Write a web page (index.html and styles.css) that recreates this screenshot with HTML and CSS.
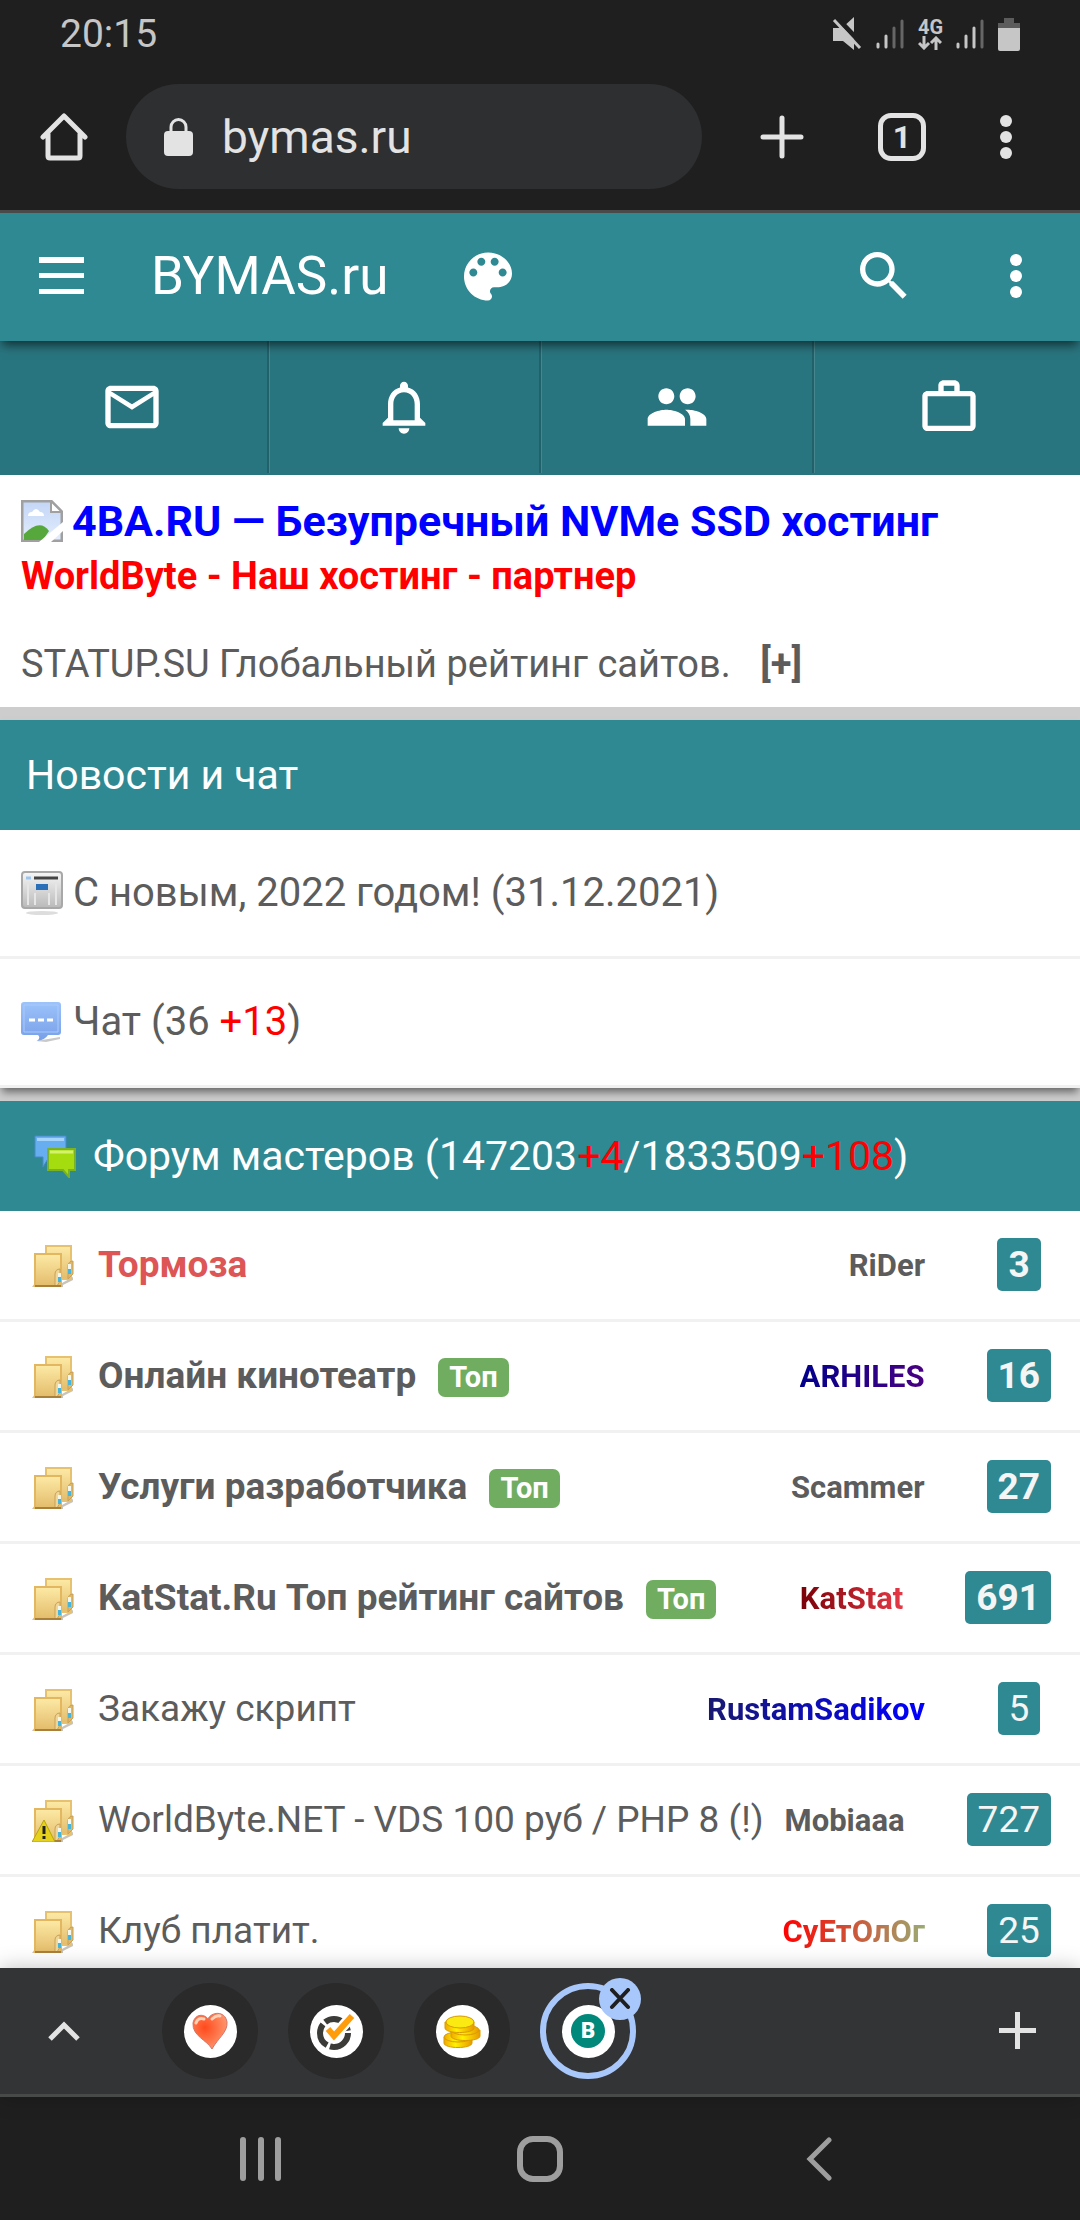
FILE: index.html
```html
<!DOCTYPE html>
<html lang="ru">
<head>
<meta charset="utf-8">
<meta name="viewport" content="width=device-width">
<title>BYMAS.ru</title>
<link rel="stylesheet" href="styles.css">
</head>
<body>

<svg class="sprite" aria-hidden="true">
  <defs>
    <linearGradient id="gold" x1="0" y1="0" x2="0" y2="1">
      <stop offset="0" stop-color="#fdeaa6"/>
      <stop offset="1" stop-color="#e3bc6b"/>
    </linearGradient>
    <linearGradient id="paper" x1="0" y1="0" x2="0" y2="1">
      <stop offset="0" stop-color="#f6f6f6"/>
      <stop offset="1" stop-color="#b9b9b9"/>
    </linearGradient>
    <linearGradient id="blue" x1="0" y1="0" x2="0" y2="1">
      <stop offset="0" stop-color="#9cc3fa"/>
      <stop offset="1" stop-color="#779fe8"/>
    </linearGradient>
    <linearGradient id="sky" x1="0" y1="0" x2="0" y2="1">
      <stop offset="0" stop-color="#c3d6f7"/>
      <stop offset="1" stop-color="#e3edfc"/>
    </linearGradient>
    <radialGradient id="heart" cx=".35" cy=".4" r=".7">
      <stop offset="0" stop-color="#ff4a1c"/>
      <stop offset="1" stop-color="#ff9a70"/>
    </radialGradient>
    <linearGradient id="coin">
      <stop offset="0" stop-color="#f0a800"/>
      <stop offset=".4" stop-color="#fff200"/>
      <stop offset="1" stop-color="#e89a00"/>
    </linearGradient>
  </defs>
  <symbol id="folder" viewBox="0 0 42 42">
    <path d="M0 42l3-4h27l11-6v3l-10 5v2z" fill="#c9c3b8"/>
    <path d="M14 1h25v33H14z" fill="url(#gold)" stroke="#e6c170" stroke-width="2"/>
    <path d="M36 34V21c0-3 2-5 5-5v13l-5 5z" fill="#dfb766" stroke="#c9a05a"/>
    <path d="M3 9h26v32H3z" fill="url(#gold)" stroke="#e3b75f" stroke-width="2"/>
    <path d="M23 41V29c0-3 2-5 5-5v12l-3 5z" fill="#efd596" stroke="#c9a05a"/>
    <path d="M3 41h26" stroke="#a9803a" stroke-width="2"/>
    <path d="M26 28h3v5h-3zM36 19h3v5h-3z" fill="#f4f7ee"/>
    <path d="M26 32h3v5h-3zM36 24h3v5h-3z" fill="#45b5dc"/>
  </symbol>
  <symbol id="dots" viewBox="0 0 12 44">
    <circle cx="6" cy="6" r="6"/><circle cx="6" cy="22" r="6"/><circle cx="6" cy="38" r="6"/>
  </symbol>
</svg>

<header class="status-bar">
  <time>20:15</time>
  <div class="status-icons">
    <svg width="30" height="34" viewBox="0 0 30 34" fill="#c6c6c6">
      <path d="M1 11h9L22 0v33L11 24H1z"/>
      <path d="M4 0l26 27" stroke="#1f1f1f" stroke-width="5"/>
      <path d="M8 11l4-5-6-6H0v8z" fill="#1f1f1f"/>
      <path d="M2 3l26 28" stroke="#c6c6c6" stroke-width="3"/>
    </svg>
    <svg width="28" height="34" viewBox="0 0 28 34" stroke="#c6c6c6" stroke-width="3" stroke-linecap="round">
      <path d="M2 27v3M10 19v11"/><path d="M18 11v19M26 4v26" stroke="#666"/>
    </svg>
    <span class="network">4G
      <svg width="24" height="14" viewBox="0 0 24 14" fill="none" stroke="#c6c6c6" stroke-width="3"><path d="M6 0v12M1 7l5 5 5-5M18 14V2M13 7l5-5 5 5"/></svg>
    </span>
    <svg width="28" height="34" viewBox="0 0 28 34" stroke="#c6c6c6" stroke-width="3" stroke-linecap="round">
      <path d="M2 27v3M10 19v11M18 11v19"/><path d="M26 4v26" stroke="#666"/>
    </svg>
    <svg width="22" height="34" viewBox="0 0 22 34">
      <path d="M6 1h10v5h6v5H0V6h6z" fill="#5c5c5c"/><path d="M0 11h22v21q0 2-2 2H2q-2 0-2-2z" fill="#c6c6c6"/>
    </svg>
  </div>
</header>

<div class="browser-bar">
  <button class="icon-btn" aria-label="Домой">
    <svg width="48" height="48" viewBox="0 0 48 48" fill="none" stroke="#e3e3e3" stroke-width="5" stroke-linejoin="round" stroke-linecap="round"><path d="M3 24L24 3l21 21M8 21v22q0 2 2 2h28q2 0 2-2V21"/></svg>
  </button>
  <label class="omnibox">
    <svg width="30" height="38" viewBox="0 0 30 38"><rect y="13" width="29" height="25" rx="4" fill="#e3e3e3"/><path d="M7 15V9a7 7 0 0 1 15 0v6" fill="none" stroke="#e3e3e3" stroke-width="3"/></svg>
    <input type="text" value="bymas.ru" aria-label="Адрес">
  </label>
  <button class="icon-btn" aria-label="Новая вкладка">
    <svg width="44" height="44" viewBox="0 0 44 44" stroke="#e3e3e3" stroke-width="5" stroke-linecap="round"><path d="M22 3v38M3 22h38"/></svg>
  </button>
  <button class="tab-count" aria-label="Вкладки">1</button>
  <button class="icon-btn" aria-label="Меню браузера">
    <svg width="12" height="44" fill="#e3e3e3"><use href="#dots"/></svg>
  </button>
</div>

<main class="page">
  <header class="site-header">
    <button class="icon-btn" aria-label="Меню">
      <svg width="46" height="38" viewBox="0 0 46 38" fill="#fff"><path d="M0 0h45v6H0zM0 16h45v5H0zM0 32h45v5H0z"/></svg>
    </button>
    <a class="logo" href="#">BYMAS.ru</a>
    <button class="icon-btn" aria-label="Оформление">
      <svg width="48" height="49" viewBox="3 3 18 18" fill="#fff"><path d="M12 3C7.030 3 3 7.030 3 12s4.030 9 9 9c.83 0 1.500-.67 1.500-1.500 0-.39-.15-.74-.39-1.010-.23-.26-.38-.61-.38-.99 0-.83.67-1.500 1.500-1.500H16c2.760 0 5-2.240 5-5 0-4.420-4.030-8-9-8zm-5.500 9C5.670 12 5 11.330 5 10.500S5.670 9 6.500 9 8 9.670 8 10.500 7.330 12 6.500 12zm3-4C8.670 8 8 7.330 8 6.500S8.670 5 9.500 5s1.500.67 1.500 1.500S10.330 8 9.500 8zm5 0c-.83 0-1.500-.67-1.500-1.500S13.670 5 14.500 5s1.500.67 1.500 1.500S15.330 8 14.500 8zm3 4c-.83 0-1.500-.67-1.500-1.500S16.670 9 17.500 9s1.500.67 1.500 1.500-.67 1.500-1.500 1.500z"/></svg>
    </button>
    <div class="header-right">
      <button class="icon-btn" aria-label="Поиск">
        <svg width="64" height="64" viewBox="0 0 24 24" fill="#fff"><path d="M15.500 14h-.79l-.28-.27A6.470 6.470 0 0 0 16 9.500 6.500 6.500 0 1 0 9.500 16c1.610 0 3.090-.59 4.230-1.570l.27.28v.79l5 4.990L20.490 19l-4.990-5zm-6 0C7.010 14 5 11.990 5 9.500S7.010 5 9.500 5 14 7.010 14 9.500 11.990 14 9.500 14z"/></svg>
      </button>
      <button class="icon-btn" aria-label="Ещё">
        <svg width="12" height="44" fill="#fff"><use href="#dots"/></svg>
      </button>
    </div>
  </header>

  <nav class="user-nav">
    <a href="#" aria-label="Почта"><svg viewBox="0 0 24 24"><path d="M22 6c0-1.100-.9-2-2-2H4c-1.100 0-2 .9-2 2v12c0 1.100.9 2 2 2h16c1.100 0 2-.9 2-2V6zm-2 0l-8 5-8-5h16zm0 12H4V8l8 5 8-5v10z"/></svg></a>
    <a href="#" aria-label="Уведомления"><svg viewBox="0 0 24 24"><path d="M12 22c1.100 0 2-.9 2-2h-4c0 1.100.9 2 2 2zm6-6v-5c0-3.070-1.630-5.640-4.500-6.320V4c0-.83-.67-1.500-1.500-1.500s-1.500.67-1.500 1.500v.68C7.640 5.360 6 7.920 6 11v5l-2 2v1h16v-1l-2-2zm-2 1H8v-6c0-2.480 1.510-4.500 4-4.500s4 2.020 4 4.500v6z"/></svg></a>
    <a href="#" aria-label="Друзья"><svg viewBox="0 0 24 24"><path d="M16 11c1.660 0 2.990-1.340 2.990-3S17.660 5 16 5s-3 1.340-3 3 1.340 3 3 3zm-8 0c1.660 0 2.990-1.340 2.990-3S9.660 5 8 5 5 6.340 5 8s1.340 3 3 3zm0 2c-2.330 0-7 1.170-7 3.500V19h14v-2.500c0-2.330-4.670-3.500-7-3.500zm8 0c-.29 0-.62.02-.97.05 1.160.84 1.970 1.970 1.970 3.450V19h6v-2.500c0-2.330-4.670-3.500-7-3.500z"/></svg></a>
    <a href="#" aria-label="Кабинет"><svg viewBox="0 0 24 24"><path d="M14 6V4h-4v2h4zM4 8v11h16V8H4zm16-2c1.110 0 2 .89 2 2v11c0 1.110-.89 2-2 2H4c-1.110 0-2-.89-2-2V8c0-1.110.89-2 2-2h4V4c0-1.110.89-2 2-2h4c1.110 0 2 .89 2 2v2h4z"/></svg></a>
  </nav>

  <section class="promo">
    <a class="promo-main" href="#">
      <svg width="42" height="42" viewBox="0 0 42 42">
        <path d="M1 1h29l11 11v29H1z" fill="url(#sky)" stroke="#a0a0a0" stroke-width="3"/>
        <path d="M7 16q0-4 4-4 4-6 8 0 4 0 4 4z" fill="#fff"/>
        <path d="M3 40V34q16-16 25-3l-6 9z" fill="#57a83c"/>
        <path d="M30 1v11h11z" fill="#fff" stroke="#a0a0a0" stroke-width="2"/>
        <path d="M18 42L42 22v9L30 42z" fill="#fff"/>
      </svg>
      <span>4BA.RU — Безупречный NVMe SSD хостинг</span>
    </a>
    <a class="promo-partner" href="#">WorldByte - Наш хостинг - партнер</a>
    <p class="promo-rating"><a href="#">STATUP.SU Глобальный рейтинг сайтов.</a> <a class="promo-add" href="#">[+]</a></p>
  </section>

  <section class="block news">
    <h2 class="block-title">Новости и чат</h2>
    <a class="news-item" href="#">
      <svg width="42" height="44" viewBox="0 0 42 44">
        <ellipse cx="21" cy="42" rx="16" ry="2" fill="#ddd"/>
        <rect x="1" y="1" width="40" height="36" rx="3" fill="url(#paper)" stroke="#a8a8a8" stroke-width="2"/>
        <path d="M5 7h5" stroke="#9cc6ee" stroke-width="3"/><path d="M13 7h24" stroke="#444" stroke-width="3"/>
        <path d="M15 13h12v6H15z" fill="#2a6fb8"/>
        <path d="M14 22v12M28 22v12M7 13v21M35 13v21" stroke="#e6e6e6" stroke-width="2"/>
      </svg>
      <span>С новым, 2022 годом! (31.12.2021)</span>
    </a>
    <a class="news-item" href="#">
      <svg width="42" height="44" viewBox="0 0 42 44">
        <path d="M15 41l24-4v2l-14 3z" fill="#c9c9c9"/>
        <path d="M3 2h34q3 0 3 3v27q0 3-3 3H27q-3 5-11 6 4-3 1-6H3q-3 0-3-3V5q0-3 3-3z" fill="url(#blue)"/>
        <path d="M3 5h34v27H3z" fill="none" stroke="#a9cafa" stroke-width="1"/>
        <path d="M8 20h24" stroke="#fff" stroke-width="3" stroke-dasharray="6 3"/>
      </svg>
      <span>Чат (36 <b class="fresh">+13</b>)</span>
    </a>
  </section>

  <section class="block forum">
    <h2 class="block-title block-title-icon">
      <svg width="42" height="44" viewBox="0 0 42 44">
        <path d="M1 2h31v21H15L9 33V23H1z" fill="#66aef0" stroke="#4a88c8"/>
        <path d="M3 4h27v3H3z" fill="#a4d4fb"/>
        <path d="M14 15h27v21h-6v7l-6-7H14z" fill="#a4dc10" stroke="#7ab226" stroke-width="2"/>
        <path d="M16 18h23" stroke="#d5f26c" stroke-width="3"/>
      </svg>
      <span>Форум мастеров (147203<b class="fresh">+4</b>/1833509<b class="fresh">+108</b>)</span>
    </h2>
    <ul class="topics">
      <li class="topic pinned">
        <svg class="topic-icon"><use href="#folder"/></svg>
        <a class="topic-title hot" href="#">Тормоза</a>
        <a class="author" href="#">RiDer</a>
        <span class="count"><span>3</span></span>
      </li>
      <li class="topic pinned">
        <svg class="topic-icon"><use href="#folder"/></svg>
        <a class="topic-title" href="#">Онлайн кинотеатр</a><span class="top">Топ</span>
        <a class="author arhiles" href="#">ARHILES</a>
        <span class="count"><span>16</span></span>
      </li>
      <li class="topic pinned">
        <svg class="topic-icon"><use href="#folder"/></svg>
        <a class="topic-title" href="#">Услуги разработчика</a><span class="top">Топ</span>
        <a class="author" href="#">Scammer</a>
        <span class="count"><span>27</span></span>
      </li>
      <li class="topic pinned">
        <svg class="topic-icon"><use href="#folder"/></svg>
        <a class="topic-title" href="#">KatStat.Ru Топ рейтинг сайтов</a><span class="top">Топ</span>
        <a class="author katstat" href="#">KatStat</a>
        <span class="count"><span>691</span></span>
      </li>
      <li class="topic">
        <svg class="topic-icon"><use href="#folder"/></svg>
        <a class="topic-title" href="#">Закажу скрипт</a>
        <a class="author rustam" href="#">RustamSadikov</a>
        <span class="count"><span>5</span></span>
      </li>
      <li class="topic">
        <svg class="topic-icon" viewBox="0 0 42 42"><use href="#folder"/><path d="M12 20L0 42h23z" fill="#e6d21c" stroke="#b5a30c"/><path d="M12 26v8M12 36v3" stroke="#222" stroke-width="3"/></svg>
        <a class="topic-title" href="#">WorldByte.NET - VDS 100 руб / PHP 8 (!)</a>
        <a class="author" href="#">Mobiaaa</a>
        <span class="count"><span>727</span></span>
      </li>
      <li class="topic">
        <svg class="topic-icon"><use href="#folder"/></svg>
        <a class="topic-title" href="#">Клуб платит.</a>
        <a class="author suetolog" href="#">СуЕтОлОг</a>
        <span class="count"><span>25</span></span>
      </li>
    </ul>
  </section>
</main>

<div class="tab-strip">
  <button class="icon-btn" aria-label="Развернуть">
    <svg width="32" height="20" viewBox="0 0 32 20" fill="none" stroke="#e3e3e3" stroke-width="5"><path d="M2 18L16 4l14 14"/></svg>
  </button>
  <div class="tabs">
    <button class="tab" aria-label="Вкладка 1"><span class="favicon">
      <svg width="38" height="38" viewBox="0 0 38 38"><path d="M21 37C16 28 1 24 2 11 4 1 14 2 17 7c3-7 17-9 19 3 1 10-9 16-15 27z" fill="url(#heart)" stroke="#d0776a" stroke-width="1"/><path d="M5 11q2-6 8-4M21 7q4-4 8-3" fill="none" stroke="#ffd2b8" stroke-width="3" stroke-linecap="round"/></svg>
    </span></button>
    <button class="tab" aria-label="Вкладка 2"><span class="favicon">
      <svg width="38" height="38" viewBox="0 0 38 38" fill="none"><circle cx="17" cy="21" r="14" stroke="#3b3b38" stroke-width="6" stroke-dasharray="26 3 24 3 29 3"/><path d="M11 17l6 7L35 4" stroke="#fff" stroke-width="11"/><path d="M11 17l6 7L35 4" stroke="#ff9c0a" stroke-width="6"/></svg>
    </span></button>
    <button class="tab" aria-label="Вкладка 3"><span class="favicon">
      <svg width="38" height="38" viewBox="0 0 38 38" fill="url(#coin)" stroke="#d99a00"><path d="M1 25v6c0 6 28 6 28 0v-6z"/><ellipse cx="15" cy="25" rx="14" ry="5"/><path d="M8 18v6c0 6 29 6 29 0v-6z"/><ellipse cx="22" cy="18" rx="14" ry="5"/><path d="M2 10v6c0 6 29 6 29 0v-6z"/><ellipse cx="17" cy="10" rx="14" ry="6" fill="#fbe912"/></svg>
    </span></button>
    <div class="tab active">
      <span class="favicon"><span class="letter">B</span></span>
      <button class="tab-close" aria-label="Закрыть вкладку">
        <svg width="22" height="22" viewBox="0 0 22 22" stroke="#1f1f1f" stroke-width="4" stroke-linecap="round"><path d="M3 2l16 17M19 2L3 19"/></svg>
      </button>
    </div>
  </div>
  <button class="icon-btn" aria-label="Добавить">
    <svg width="38" height="38" viewBox="0 0 38 38" fill="#e3e3e3"><path d="M16 0h5v16h16v5H21v16h-5V21H0v-5h16z"/></svg>
  </button>
</div>

<nav class="system-nav">
  <button class="icon-btn" aria-label="Недавние"><svg width="46" height="44" viewBox="0 0 46 44" stroke="#9e9e9e" stroke-width="6" stroke-linecap="round"><path d="M5 3v38M23 3v38M40 3v38"/></svg></button>
  <button class="icon-btn" aria-label="Главный экран"><svg width="46" height="46" viewBox="0 0 46 46" fill="none" stroke="#9e9e9e" stroke-width="6"><rect x="3" y="3" width="40" height="40" rx="13"/></svg></button>
  <button class="icon-btn" aria-label="Назад"><svg width="46" height="44" viewBox="0 0 46 44" fill="none" stroke="#9e9e9e" stroke-width="5" stroke-linecap="round"><path d="M33 3L14 22l19 19"/></svg></button>
</nav>

</body>
</html>
```
FILE: styles.css
```css
* {
  box-sizing: border-box;
}
body {
  margin: 0;
  height: 100vh;
  display: flex;
  flex-direction: column;
  background: #1f1f1f;
  color: #5c5c5c;
  font-family: Roboto, "Liberation Sans", sans-serif;
  overflow: hidden;
}
a {
  color: inherit;
  text-decoration: none;
}
button {
  font-family: inherit;
  cursor: pointer;
}
svg {
  display: block;
  flex-shrink: 0;
}
.sprite {
  position: absolute;
  width: 0;
  height: 0;
}
.icon-btn {
  display: flex;
  flex-shrink: 0;
  padding: 0;
  border: 0;
  background: none;
}

/* phone status bar */
.status-bar {
  display: flex;
  justify-content: space-between;
  align-items: center;
  padding: 10px 60px 6px;
  font-size: 39px;
  line-height: 48px;
  color: #c6c6c6;
}
.status-icons {
  display: flex;
  align-items: center;
  gap: 14px;
}
.network {
  width: 24px;
  font-size: 20px;
  line-height: 18px;
  font-weight: 700;
}

/* browser toolbar */
.browser-bar {
  display: flex;
  align-items: center;
  padding: 20px 68px 21px 40px;
  border-bottom: 3px solid #4a4a4a;
}
.omnibox {
  flex: 1;
  display: flex;
  align-items: center;
  gap: 28px;
  min-width: 0;
  height: 105px;
  margin: 0 58px 0 38px;
  padding: 0 38px;
  border-radius: 53px;
  background: #2e2f31;
}
.omnibox input {
  flex: 1;
  min-width: 0;
  padding: 0;
  border: 0;
  outline: none;
  background: none;
  color: #e3e3e3;
  font-family: inherit;
  font-size: 46px;
}
.tab-count {
  flex-shrink: 0;
  width: 48px;
  height: 48px;
  margin: 0 74px;
  padding: 0;
  border: 5px solid #e3e3e3;
  border-radius: 13px;
  background: none;
  color: #e3e3e3;
  font-size: 32px;
  line-height: 36px;
  font-weight: 700;
}

/* site */
.page {
  flex: 1;
  min-height: 0;
  overflow: hidden;
  background: #cdcdcd;
}
.site-header {
  position: relative;
  z-index: 1;
  display: flex;
  align-items: center;
  height: 128px;
  padding: 0 58px 2px 39px;
  background: #2f8993;
  color: #fff;
  box-shadow: 0 6px 10px -2px rgba(0, 0, 0, 0.6);
}
.logo {
  margin: 0 76px 0 66px;
  font-size: 53px;
  line-height: 60px;
}
.header-right {
  display: flex;
  align-items: center;
  gap: 94px;
  margin-left: auto;
}
.user-nav {
  display: grid;
  grid-template-columns: repeat(4, 1fr);
  padding-bottom: 2px;
  margin: 0 -6px 0 -4px;
  background: #29757f;
}
.user-nav a {
  display: flex;
  justify-content: center;
  align-items: center;
  height: 132px;
  border-right: 2px solid #22616a;
  border-left: 1px solid #47868f;
}
.user-nav svg {
  width: 64px;
  height: 64px;
  fill: #fff;
}

.promo {
  padding: 20px 21px 14px;
  background: #fff;
  font-size: 38px;
  line-height: 58px;
}
.promo-main {
  display: flex;
  align-items: center;
  gap: 9px;
  color: #00f;
  font-size: 43px;
  line-height: 52px;
  font-weight: 700;
}
.promo-partner {
  display: block;
  color: #f00;
  font-weight: 700;
}
.promo-rating {
  margin: 30px 0 0;
}
.promo-add {
  margin-left: 20px;
  font-weight: 700;
}

.block {
  margin-top: 13px;
  background: #fff;
}
.news {
  box-shadow: 0 6px 8px -2px rgba(0, 0, 0, 0.5);
}
.block-title {
  margin: 0;
  padding: 0 26px;
  background: #2f8993;
  color: #fff;
  font-size: 41px;
  line-height: 110px;
  font-weight: 400;
}
.block-title-icon {
  display: flex;
  align-items: center;
  gap: 17px;
  padding: 0 34px;
}
.fresh {
  color: #f00;
  font-weight: 400;
}
.news-item {
  display: flex;
  align-items: center;
  gap: 10px;
  padding: 0 21px;
  border-bottom: 3px solid #f1f1f1;
  font-size: 40px;
  line-height: 126px;
}

.topics {
  margin: 0;
  padding: 0;
  list-style: none;
}
.topic {
  display: flex;
  align-items: center;
  height: 111px;
  padding: 0 29px 2px 32px;
  border-bottom: 3px solid #f1f1f1;
  font-size: 37px;
  white-space: nowrap;
}
.pinned {
  font-weight: 700;
}
.topic-icon {
  width: 42px;
  height: 42px;
  margin: 4px 24px 0 0;
}
.hot {
  color: #dd5555;
}
.top {
  margin: 4px 0 0 22px;
  padding: 0 11px;
  border-radius: 7px;
  background: #70ad61;
  color: #fff;
  font-size: 29px;
  line-height: 39px;
}
.author {
  margin: 2px 0 0 auto;
  font-size: 31px;
  font-weight: 700;
}
.arhiles, .katstat, .rustam, .suetolog {
  color: transparent;
  -webkit-background-clip: text;
  background-clip: text;
}
.arhiles {
  background-image: linear-gradient(90deg, #00008b, #4b0082);
}
.katstat {
  background-image: linear-gradient(90deg, #7a0008, #e63946);
}
.rustam {
  background-image: linear-gradient(90deg, #191970, #0000ff);
}
.suetolog {
  background-image: linear-gradient(90deg, #ff0000, #9aac72);
}
.count {
  display: flex;
  justify-content: center;
  min-width: 64px;
  margin-left: 62px;
}
.count span {
  padding: 0 11px;
  border-radius: 5px;
  background: #2f8993;
  color: #f5f5f5;
  line-height: 53px;
}

/* tab strip and system buttons */
.tab-strip {
  position: relative;
  display: flex;
  align-items: center;
  justify-content: space-between;
  height: 129px;
  padding: 0 43px 0 48px;
  border-bottom: 3px solid #484949;
  background: #333436;
  box-shadow: 0 0 20px rgba(0, 0, 0, 0.25);
}
.tabs {
  flex: 1;
  display: flex;
  gap: 30px;
  margin-left: 82px;
}
.tab {
  position: relative;
  display: flex;
  align-items: center;
  justify-content: center;
  width: 96px;
  height: 96px;
  padding: 0;
  border: 0;
  border-radius: 50%;
  background: #2a2a2a;
}
.active {
  border: 6px solid #a8c7fa;
  background: none;
}
.favicon {
  display: flex;
  align-items: center;
  justify-content: center;
  width: 53px;
  height: 53px;
  border-radius: 50%;
  background: #fff;
}
.letter {
  width: 34px;
  border-radius: 50%;
  background: #00897b;
  color: #fff;
  font-size: 22px;
  line-height: 34px;
  font-weight: 900;
  text-align: center;
}
.tab-close {
  position: absolute;
  top: -11px;
  right: -11px;
  display: flex;
  align-items: center;
  justify-content: center;
  width: 42px;
  height: 42px;
  padding: 0;
  border: 0;
  border-radius: 50%;
  background: #a8c7fa;
}
.system-nav {
  display: flex;
  justify-content: space-between;
  align-items: center;
  height: 123px;
  padding: 0 22%;
}
```
